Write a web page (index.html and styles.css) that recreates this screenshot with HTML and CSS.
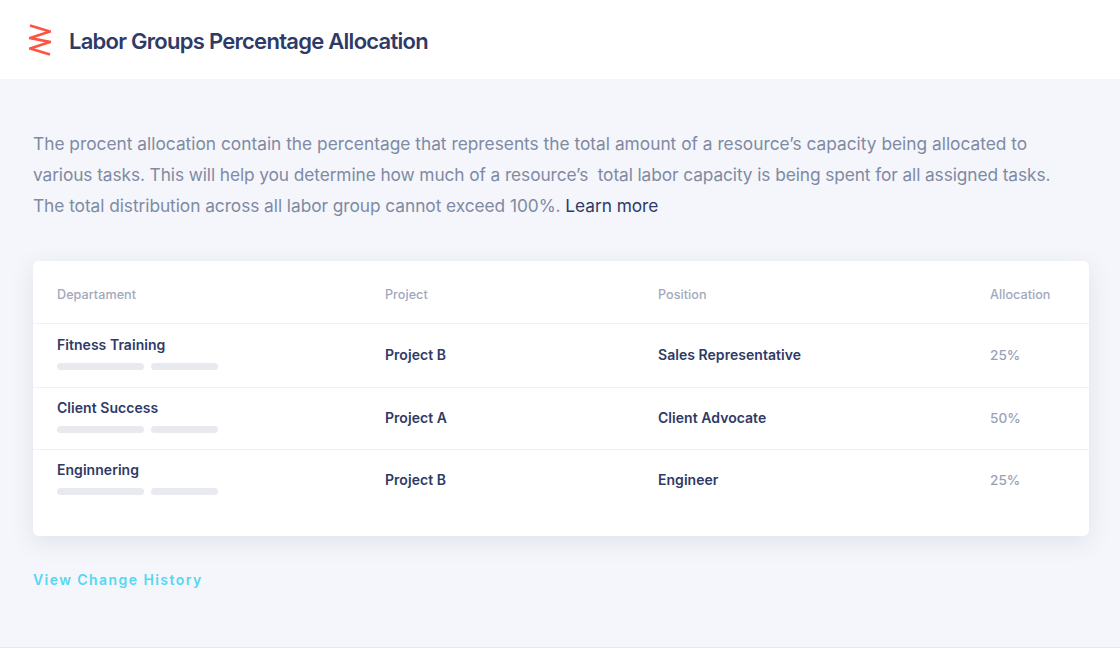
FILE: index.html
```html
<!DOCTYPE html>
<html lang="en">
<head>
<meta charset="utf-8">
<title>Labor Groups Percentage Allocation</title>
<link rel="stylesheet" href="styles.css">
</head>
<body>
<header class="topbar">
  <svg class="logo" width="22" height="32" viewBox="0 0 22 32" fill="none" stroke="#ff5340" stroke-width="2.7">
    <path d="M1 1.5L21 7.5L1 14L21 18L1 24.5L21 30.5"/>
  </svg>
  <h1 class="title">Labor Groups Percentage Allocation</h1>
</header>
<main class="content">
  <p class="intro">The procent allocation contain the percentage that represents the total amount of a resource’s capacity being allocated to <span class="line-two">various tasks. This will help you determine how much of a resource’s&nbsp; total labor capacity is being spent for all assigned tasks.</span> <span class="line-three">The total distribution across all labor group cannot exceed 100%. <a class="learn" href="#">Learn more</a></span></p>
  <section class="card">
    <div class="row head">
      <div>Departament</div><div>Project</div><div>Position</div><div>Allocation</div>
    </div>
    <div class="row item">
      <div class="dept"><span>Fitness Training</span><span class="bars"><i class="bar long"></i><i class="bar short"></i></span></div>
      <div>Project B</div><div>Sales Representative</div><div class="pct">25%</div>
    </div>
    <div class="row item">
      <div class="dept"><span>Client Success</span><span class="bars"><i class="bar long"></i><i class="bar short"></i></span></div>
      <div>Project A</div><div>Client Advocate</div><div class="pct">50%</div>
    </div>
    <div class="row item last">
      <div class="dept"><span>Enginnering</span><span class="bars"><i class="bar long"></i><i class="bar short"></i></span></div>
      <div>Project B</div><div>Engineer</div><div class="pct">25%</div>
    </div>
  </section>
  <a class="history" href="#">View Change History</a>
</main>
</body>
</html>
```
FILE: styles.css
```css
* { box-sizing: border-box; }
html, body { margin: 0; height: 100%; }
body {
  width: 1120px; height: 648px; overflow: hidden;
  background: #f4f6fb;
  border-bottom: 1px solid #e6e8ee;
  font-family: "Inter", "Liberation Sans", sans-serif;
  color: #2f3a66;
}
.topbar {
  height: 79px; background: #fff;
  display: flex; align-items: center;
  padding-left: 29px; gap: 18px;
}
.logo { flex: none; }
.title { margin: 2px 0 0; font-size: 22px; font-weight: 600; letter-spacing: -0.73px; color: #2f3a66; }
.content { padding: 49px 31px 0 33px; }
.intro { margin: 0; font-size: 17.32px; line-height: 31px; color: #7f8aa3; width: 1035px; }
.line-two { letter-spacing: -.1px; }
.line-three { letter-spacing: -.06px; }
.learn { color: #2f3a66; text-decoration: none; }
.card {
  margin-top: 40px; height: 275px; background: #fff; border-radius: 6px;
  box-shadow: 0 6px 24px rgba(50, 60, 100, .10);
}
.row {
  display: grid; grid-template-columns: 328px 273px 332px 1fr;
  padding-left: 24px; align-items: center;
  font-size: 14px; font-weight: 600; letter-spacing: .04px;
}
.head { height: 62px; padding-top: 4px; font-size: 12.6px; font-weight: 500; color: #a2a8bc; }
.item { border-top: 1px solid #eff1f5; height: 64px; padding-bottom: 2px; }
.item.last { height: 62px; }
.item:nth-child(3) { height: 62px; }
.dept { display: flex; flex-direction: column; gap: 10px; margin-top: -3px; }
.bars { display: flex; gap: 7px; }
.bar { height: 7px; border-radius: 4px; background: #e8eaf0; display: block; }
.long { width: 87px; }
.short { width: 67px; }
.pct { color: #9aa1b6; font-size: 13.6px; font-weight: 500; }
.history {
  display: block; margin-top: 35px; font-size: 14px; font-weight: 600;
  letter-spacing: 1.43px; color: #55d6f2; text-decoration: none;
}
```
